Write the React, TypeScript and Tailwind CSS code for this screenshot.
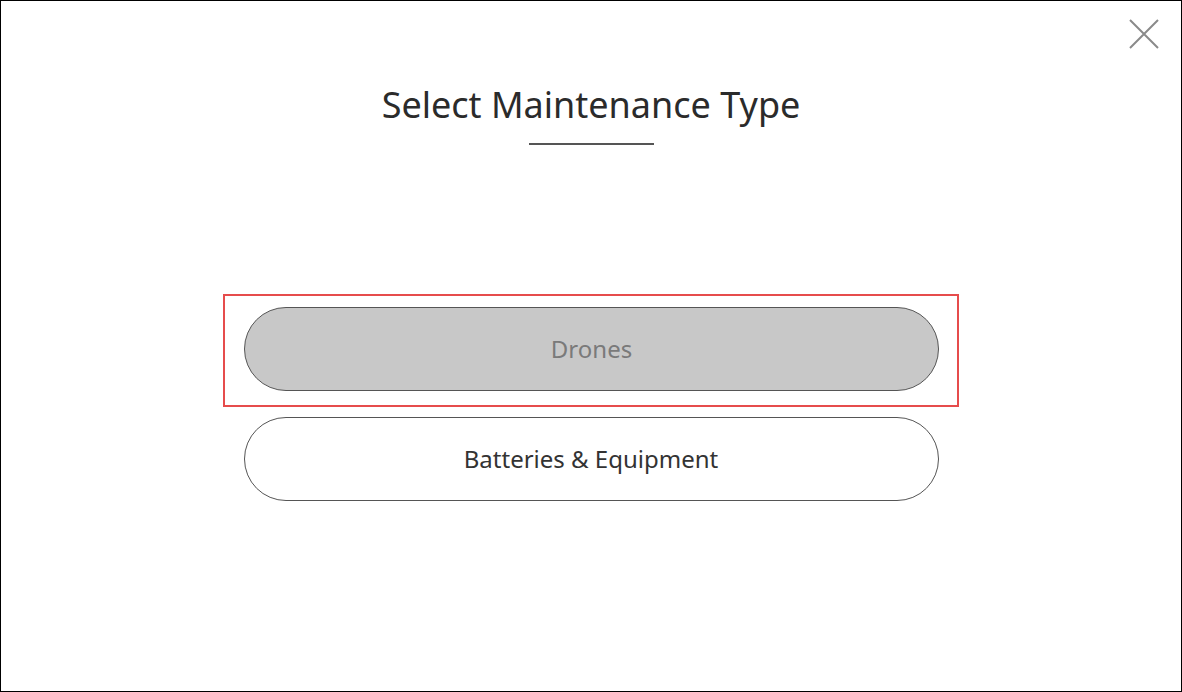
import React from "react";

export default function App() {
  return (
    <div
      className="relative w-[1182px] h-[692px] border border-black bg-white flex flex-col items-center"
      style={{ fontFamily: "'Noto Sans', sans-serif" }}
    >
      <button className="absolute right-[22px] top-[18px] w-[30px] h-[30px]" aria-label="close">
        <svg width="30" height="30" viewBox="0 0 30 30">
          <path d="M1 1 L29 29 M29 1 L1 29" stroke="#8a8a8a" strokeWidth="2" />
        </svg>
      </button>
      <h1 className="mt-[83px] text-[36px] leading-[42px] text-[#2b2b2b]">
        Select Maintenance Type
      </h1>
      <div className="mt-[17px] w-[125px] h-[2px] bg-[#555]" />
      <div className="mt-[149px] border-2 border-[#e64c4c] pl-[19px] pr-[18px] pt-[11px] pb-[14px]">
        <button className="w-[695px] h-[84px] rounded-full border border-[#555] bg-[#c8c8c8] text-[24px] text-[#7a7a7a]">
          Drones
        </button>
      </div>
      <button className="mt-[10px] w-[695px] h-[84px] rounded-full border border-[#555] bg-white text-[24px] text-[#333]">
        Batteries &amp; Equipment
      </button>
    </div>
  );
}
